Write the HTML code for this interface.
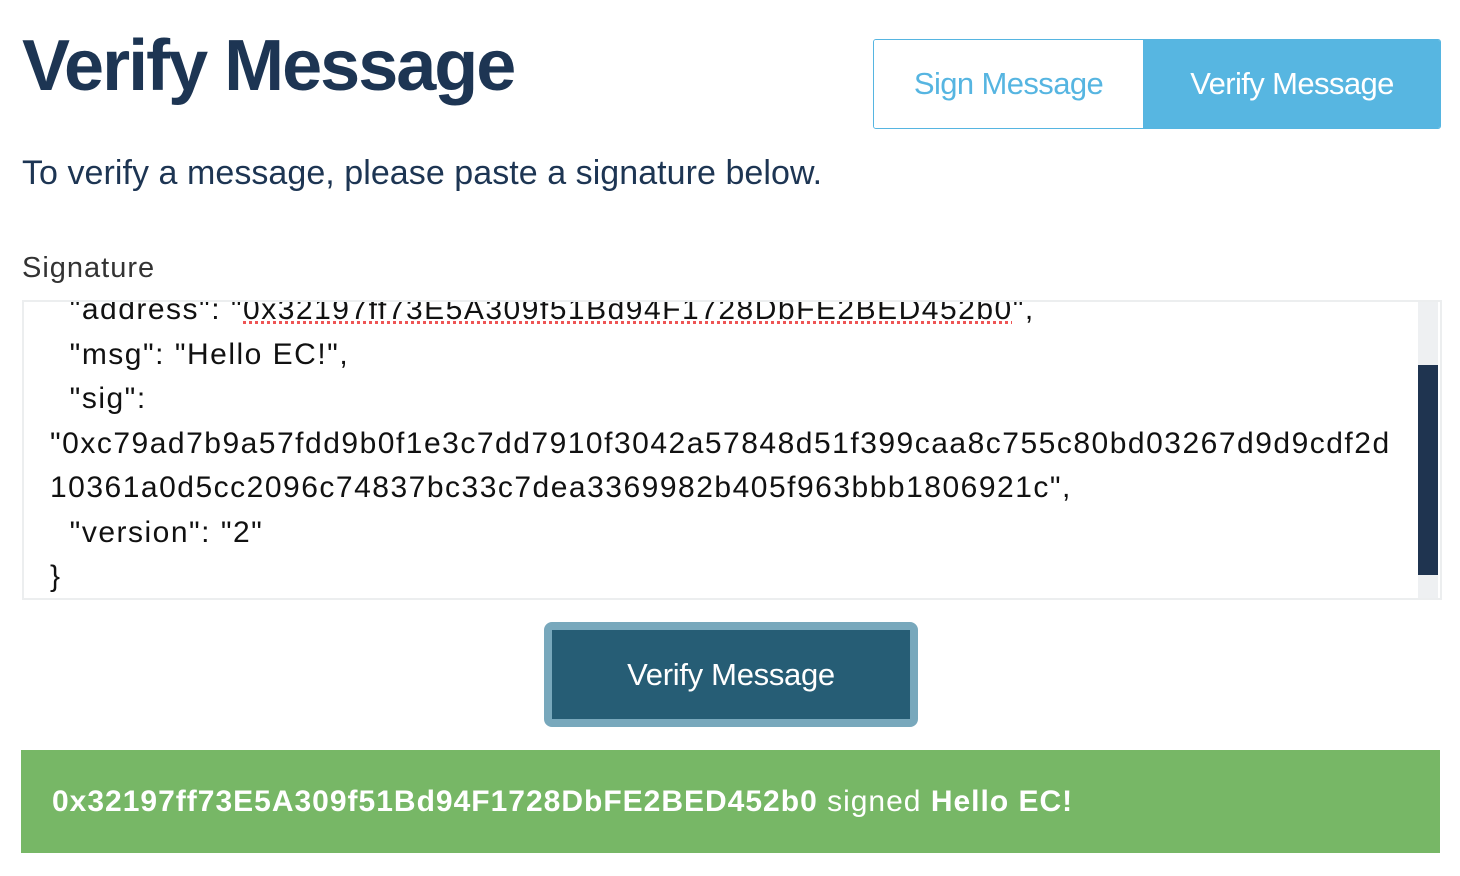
<!DOCTYPE html>
<html><head><style>
body{margin:0;width:1460px;height:876px;background:#fff;font-family:"Liberation Sans",sans-serif;position:relative;overflow:hidden}
.a{position:absolute;white-space:nowrap}
h1{position:absolute;left:22px;top:25px;margin:0;font-size:72px;font-weight:bold;color:#1d3553;letter-spacing:-2px}
.tabs{position:absolute;left:873px;top:39px;width:566px;height:88px;border:1px solid #56b5e1;border-radius:3px;display:flex;overflow:hidden}
.tabs div{display:flex;align-items:center;justify-content:center;font-size:31px;letter-spacing:-0.6px}
.ta{position:absolute;left:22px;top:300px;width:1416px;height:296px;border:2px solid #eceeef;overflow:hidden}
.ta pre{margin:0;position:absolute;left:26px;top:-14px;font-family:"Liberation Sans",sans-serif;font-size:30px;line-height:44.5px;color:#111;letter-spacing:1.5px}
.sb{position:absolute;left:1394px;top:0;width:20px;height:296px;background:#eef0f2}
.th{position:absolute;left:1394px;top:63px;width:20px;height:210px;background:#1f3450}
.btn{position:absolute;left:544px;top:622px;width:358px;height:89px;border:8px solid #78a8bc;border-radius:8px;background:#265d75;color:#fff;font-size:31px;display:flex;align-items:center;justify-content:center;letter-spacing:-0.3px}
.ok{position:absolute;left:21px;top:750px;width:1419px;height:103px;background:#77b766;color:#fff;font-size:30px;display:flex;align-items:center;padding-left:31px;box-sizing:border-box;letter-spacing:1px}
</style></head><body>
<h1>Verify Message</h1>
<div class="tabs"><div style="width:269px;color:#56b5e1;background:#fff;border-right:1px solid #56b5e1">Sign Message</div><div style="flex:1;background:#57b6e1;color:#fff">Verify Message</div></div>
<div class="a" style="left:22px;top:154px;font-size:34px;color:#1d3553;letter-spacing:0.05px">To verify a message, please paste a signature below.</div>
<div class="a" style="left:22px;top:252px;font-size:29px;color:#333;letter-spacing:1px">Signature</div>
<div class="ta"><pre>  "address": "<span style="text-decoration:underline dotted #e55;">0x32197ff73E5A309f51Bd94F1728DbFE2BED452b0</span>",
  "msg": "Hello EC!",
  "sig":
"0xc79ad7b9a57fdd9b0f1e3c7dd7910f3042a57848d51f399caa8c755c80bd03267d9d9cdf2d
10361a0d5cc2096c74837bc33c7dea3369982b405f963bbb1806921c",
  "version": "2"
}</pre><div class="sb"></div><div class="th"></div></div>
<div class="btn">Verify Message</div>
<div class="ok"><b>0x32197ff73E5A309f51Bd94F1728DbFE2BED452b0</b>&nbsp;signed&nbsp;<b>Hello EC!</b></div>
</body></html>
